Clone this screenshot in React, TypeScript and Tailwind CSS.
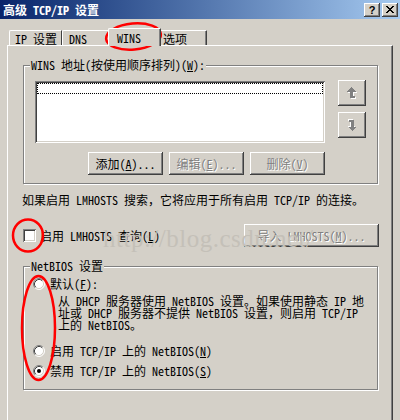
import React from 'react';

const raised =
  'shadow-[inset_-1px_-1px_0_#404040,inset_1px_1px_0_#ffffff,inset_-2px_-2px_0_#808080]';
const sunken =
  'shadow-[inset_1px_1px_0_#808080,inset_-1px_-1px_0_#ffffff,inset_2px_2px_0_#404040,inset_-2px_-2px_0_#d4d0c8]';
const etched = 'border border-[#808080] shadow-[inset_1px_1px_0_#ffffff,1px_1px_0_#ffffff]';
const disabledText = 'text-[#808080] [text-shadow:1px_1px_0_#ffffff]';

const Arrow: React.FC<{ down?: boolean }> = ({ down }) => {
  const shape = (
    <>
      <polygon points="4.5,0 9,4.5 0,4.5" />
      <rect x="3" y="4" width="3" height="7" />
      <rect x="6" y="9" width="2" height="2" />
    </>
  );
  return (
    <svg width="11" height="13" viewBox="0 0 11 13" shapeRendering="crispEdges">
      <g transform={down ? 'rotate(180 5 6)' : undefined}>
        <g fill="#ffffff" transform="translate(1 1)">{shape}</g>
        <g fill="#808080">{shape}</g>
      </g>
    </svg>
  );
};

const Radio: React.FC<{ checked?: boolean }> = ({ checked }) => (
  <svg width="12" height="12" viewBox="0 0 12 12" className="shrink-0">
    <circle cx="6" cy="6" r="5" fill="#ffffff" />
    <path d="M9.89 2.11 A5.5 5.5 0 0 0 2.11 9.89" stroke="#808080" fill="none" />
    <path d="M9.89 2.11 A5.5 5.5 0 0 1 2.11 9.89" stroke="#ffffff" fill="none" />
    <path d="M9.18 2.82 A4.5 4.5 0 0 0 2.82 9.18" stroke="#404040" fill="none" />
    <path d="M9.18 2.82 A4.5 4.5 0 0 1 2.82 9.18" stroke="#d4d0c8" fill="none" />
    {checked && <circle cx="6" cy="6" r="2" fill="#000000" />}
  </svg>
);

const Button: React.FC<{ w: string; h?: string; disabled?: boolean; children: React.ReactNode }> = ({
  w,
  h = 'h-[23px]',
  disabled,
  children,
}) => (
  <div
    className={`${w} ${h} ${raised} bg-[#d4d0c8] flex items-center justify-center whitespace-pre ${
      disabled ? disabledText : ''
    }`}
  >
    {children}
  </div>
);

export default function App() {
  return (
    <div className="relative w-[400px] h-[420px] overflow-hidden bg-[#d4d0c8] text-black text-[12px] leading-[12px] font-['Noto_Sans_Mono_CJK_SC','Noto_Sans_CJK_SC',monospace]">
      {/* title bar */}
      <div className="h-[19px] flex items-center justify-between pl-[3px] pr-[2px] bg-gradient-to-r from-[#0a246a] to-[#a6caf0]">
        <span className="font-bold text-white whitespace-pre">高级 TCP/IP 设置</span>
        <div className="flex gap-[2px]">
          <div className={`w-[16px] h-[14px] bg-[#d4d0c8] ${raised} flex items-center justify-center font-['Liberation_Sans',sans-serif] font-bold text-[11px]`}>
            ?
          </div>
          <div className={`w-[16px] h-[14px] bg-[#d4d0c8] ${raised} flex items-center justify-center`}>
            <svg width="8" height="7" viewBox="0 0 8 7" shapeRendering="crispEdges">
              <path d="M0 0h2v1h-2zM6 0h2v1h-2zM1 1h2v1h-2zM5 1h2v1h-2zM2 2h4v1h-4zM3 3h2v1h-2zM2 4h4v1h-4zM1 5h2v1h-2zM5 5h2v1h-2zM0 6h2v1h-2zM6 6h2v1h-2z" fill="#000" />
            </svg>
          </div>
        </div>
      </div>

      {/* tabs */}
      <div className="mt-[9px] h-[17px] flex items-end pl-[9px]">
        <div className="w-[53px] h-[15px] pl-[5px] pt-[2px] border-t border-l border-white border-r border-r-[#404040] rounded-tl-[2px] whitespace-pre">
          IP 设置
        </div>
        <div className="w-[48px] h-[15px] pl-[6px] pt-[2px] border-t border-l border-white border-r border-r-[#404040] rounded-tl-[2px]">
          DNS
        </div>
        <div className="relative z-10 ml-[-2px] mb-[-1px] w-[53px] h-[18px] pl-[8px] pt-[3px] bg-[#d4d0c8] border-t border-l border-white border-r border-r-[#404040] shadow-[inset_-1px_0_0_#808080] rounded-tl-[2px]">
          WINS
        </div>
        <div className="w-[46px] h-[15px] pl-[2px] pt-[2px] border-t border-white border-r border-r-[#404040] shadow-[inset_-1px_0_0_#808080]">
          选项
        </div>
      </div>

      {/* panel */}
      <div className="ml-[7px] w-[386px] h-[400px] border-t border-l border-white border-r border-r-[#404040] shadow-[inset_-1px_0_0_#808080]">
        {/* WINS addresses */}
        <div className={`relative ml-[15px] mt-[19px] w-[355px] h-[119px] ${etched}`}>
          <span className="absolute left-[6px] top-[-7px] px-[1px] bg-[#d4d0c8] whitespace-pre">
            WINS 地址(按使用顺序排列)(<u>W</u>):
          </span>
          <div className="pl-[11px] pt-[15px]">
            <div className="flex">
              <div className={`w-[290px] h-[62px] bg-white p-[2px] ${sunken}`}>
                <div className="h-[11px] border border-dotted border-black" />
              </div>
              <div className="ml-[13px] mt-[-1px] flex flex-col gap-[6px]">
                <div className={`w-[28px] h-[26px] ${raised} flex items-center justify-center`}>
                  <Arrow />
                </div>
                <div className={`w-[28px] h-[26px] ${raised} flex items-center justify-center`}>
                  <Arrow down />
                </div>
              </div>
            </div>
            <div className="mt-[9px] ml-[53px] flex gap-[6px]">
              <Button w="w-[75px]">
                添加(<u>A</u>)...
              </Button>
              <Button w="w-[75px]" disabled>
                编辑(<u>E</u>)...
              </Button>
              <Button w="w-[75px]" disabled>
                删除(<u>V</u>)
              </Button>
            </div>
          </div>
        </div>

        <div className="mt-[10px] ml-[14px] whitespace-pre">
          如果启用 LMHOSTS 搜索，它将应用于所有启用 TCP/IP 的连接。
        </div>

        <div className="mt-[18px] pl-[15px] pr-[13px] flex items-center">
          <div className={`w-[13px] h-[13px] bg-white ${sunken}`} />
          <span className="ml-[4px] whitespace-pre">
            启用 LMHOSTS 查询(<u>L</u>)
          </span>
          <div className="ml-auto">
            <Button w="w-[135px]" disabled>
              导入 LMHOSTS(<u>M</u>)...
            </Button>
          </div>
        </div>

        {/* NetBIOS */}
        <div className={`relative ml-[15px] mt-[19px] w-[355px] h-[124px] ${etched}`}>
          <span className="absolute left-[6px] top-[-7px] px-[1px] bg-[#d4d0c8] whitespace-pre">NetBIOS 设置</span>
          <div className="pl-[9px] pt-[11px]">
            <div className="flex items-center gap-[5px]">
              <Radio />
              <span className="whitespace-pre">
                默认(<u>F</u>):
              </span>
            </div>
            <div className="mt-[5px] ml-[25px] whitespace-pre">
              从 DHCP 服务器使用 NetBIOS 设置。如果使用静态 IP 地
              <br />
              址或 DHCP 服务器不提供 NetBIOS 设置，则启用 TCP/IP
              <br />
              上的 NetBIOS。
            </div>
            <div className="mt-[14px] flex items-center gap-[5px]">
              <Radio />
              <span className="whitespace-pre">
                启用 TCP/IP 上的 NetBIOS(<u>N</u>)
              </span>
            </div>
            <div className="mt-[8px] flex items-center gap-[5px]">
              <Radio checked />
              <span className="whitespace-pre">
                禁用 TCP/IP 上的 NetBIOS(<u>S</u>)
              </span>
            </div>
          </div>
        </div>
      </div>

      {/* watermark */}
      <div className="absolute left-[103px] top-[226px] text-[25px] leading-[25px] tracking-[0.5px] text-[#c4c0b8] font-['Liberation_Serif',serif] pointer-events-none">
        http://blog.csdn.net/
      </div>

      {/* red annotations */}
      <svg className="absolute left-0 top-0 pointer-events-none" width="400" height="420" viewBox="0 0 400 420">
        <g fill="none" stroke="#ff0000" strokeWidth="2.5">
          <ellipse cx="133.5" cy="36.5" rx="27.5" ry="13" transform="rotate(-5 133.5 36.5)" />
          <ellipse cx="28" cy="235.5" rx="15" ry="16" />
          <ellipse cx="38.5" cy="328" rx="16.5" ry="52" />
        </g>
      </svg>
    </div>
  );
}
